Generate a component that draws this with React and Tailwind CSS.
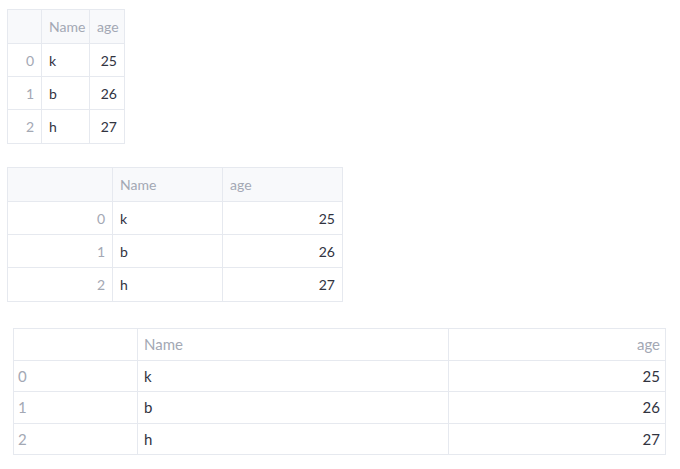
import React from "react";

const rows = [
  { i: 0, name: "k", age: 25 },
  { i: 1, name: "b", age: 26 },
  { i: 2, name: "h", age: 27 },
];

// one table: widths/heights come in as full class names so tailwind picks them up
function Table({ cols, heights, headBg, className, idxCls, nameCls, ageCls, ageHeadCls }) {
  const [hh, ...rh] = heights;
  const cell = "flex items-center border-r border-b border-[#e6e9ef]";
  return (
    <div className={`inline-flex flex-col border-l border-t border-[#e6e9ef] ${className}`}>
      <div className={`flex ${headBg} ${hh}`}>
        <div className={`${cell} ${cols[0]}`} />
        <div className={`${cell} ${cols[1]} ${nameCls} text-[#a3a8b4]`}>Name</div>
        <div className={`${cell} ${cols[2]} ${ageHeadCls} text-[#a3a8b4]`}>age</div>
      </div>
      {rows.map((r, n) => (
        <div key={r.i} className={`flex bg-white ${rh[n]}`}>
          <div className={`${cell} ${cols[0]} ${idxCls} text-[#a3a8b4]`}>{r.i}</div>
          <div className={`${cell} ${cols[1]} ${nameCls} text-[#31333f]`}>{r.name}</div>
          <div className={`${cell} ${cols[2]} ${ageCls} justify-end text-[#31333f]`}>{r.age}</div>
        </div>
      ))}
    </div>
  );
}

export default function App() {
  return (
    <div className="bg-white w-[680px] h-[469px] text-[14px] flex flex-col items-start font-[Lato,'Noto_Sans',sans-serif]">
      <Table
        className="ml-[7px] mt-[9px]"
        cols={["w-[34px]", "w-[48px]", "w-[35px]"]}
        heights={["h-[34px]", "h-[33px]", "h-[33px]", "h-[34px]"]}
        headBg="bg-[#f8f9fb]"
        idxCls="justify-end pr-[7px]"
        nameCls="pl-[7px]"
        ageCls="pr-[7px]"
        ageHeadCls="pl-[7px]"
      />
      <Table
        className="ml-[7px] mt-[23px]"
        cols={["w-[105px]", "w-[110px]", "w-[120px]"]}
        heights={["h-[34px]", "h-[33px]", "h-[33px]", "h-[34px]"]}
        headBg="bg-[#f8f9fb]"
        idxCls="justify-end pr-[7px]"
        nameCls="pl-[7px]"
        ageCls="pr-[7px]"
        ageHeadCls="pl-[7px]"
      />
      <Table
        className="ml-[13px] mt-[26px] text-[15px]"
        cols={["w-[124px]", "w-[311px]", "w-[217px]"]}
        heights={["h-[32px]", "h-[31px]", "h-[32px]", "h-[31px]"]}
        headBg="bg-white"
        idxCls="justify-start pl-[4px]"
        nameCls="pl-[6px]"
        ageCls="pr-[5px]"
        ageHeadCls="justify-end pr-[5px]"
      />
    </div>
  );
}
